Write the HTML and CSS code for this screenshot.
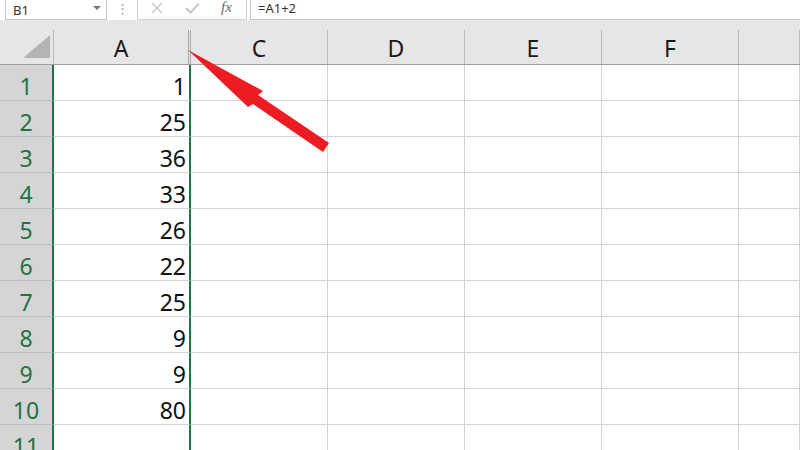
FILE: index.html
```html
<!DOCTYPE html>
<html lang="en">
<head>
    <meta charset="UTF-8">
    <title>Sheet1</title>
    <link rel="stylesheet" href="styles.css">
</head>
<body>
    <div class="sheet">
        <div class="toolbar">
            <div class="namebox"><span>B1</span><span class="caret"></span></div>
            <div class="dots">&#8942;</div>
            <div class="fnbox">
                <svg class="icon" width="12" height="12" viewBox="0 0 12 12"><path d="M1 1 L11 11 M11 1 L1 11" stroke="#c8c8c8" stroke-width="1.4" fill="none"/></svg>
                <svg class="icon" width="15" height="12" viewBox="0 0 15 12"><path d="M1 6 L5.5 10.5 L14 1.5" stroke="#c8c8c8" stroke-width="2" fill="none"/></svg>
                <span class="fx">fx</span>
            </div>
            <div class="formula">=A1+2</div>
        </div>
        <div class="band"></div>

        <div class="hrow">
            <div class="corner">
                <svg width="53" height="34" viewBox="0 0 53 34"><polygon points="23,28 50,28 50,5" fill="#b4b4b4"/></svg>
            </div>
            <div class="hcell a">A</div>
            <div class="hcell">C</div>
            <div class="hcell">D</div>
            <div class="hcell">E</div>
            <div class="hcell">F</div>
            <div class="hcell"></div>
        </div>

        <div class="row"><div class="rh">1</div><div class="cell a">1</div><div class="cell"></div><div class="cell"></div><div class="cell"></div><div class="cell"></div><div class="cell"></div></div>
        <div class="row"><div class="rh">2</div><div class="cell a">25</div><div class="cell"></div><div class="cell"></div><div class="cell"></div><div class="cell"></div><div class="cell"></div></div>
        <div class="row"><div class="rh">3</div><div class="cell a">36</div><div class="cell"></div><div class="cell"></div><div class="cell"></div><div class="cell"></div><div class="cell"></div></div>
        <div class="row"><div class="rh">4</div><div class="cell a">33</div><div class="cell"></div><div class="cell"></div><div class="cell"></div><div class="cell"></div><div class="cell"></div></div>
        <div class="row"><div class="rh">5</div><div class="cell a">26</div><div class="cell"></div><div class="cell"></div><div class="cell"></div><div class="cell"></div><div class="cell"></div></div>
        <div class="row"><div class="rh">6</div><div class="cell a">22</div><div class="cell"></div><div class="cell"></div><div class="cell"></div><div class="cell"></div><div class="cell"></div></div>
        <div class="row"><div class="rh">7</div><div class="cell a">25</div><div class="cell"></div><div class="cell"></div><div class="cell"></div><div class="cell"></div><div class="cell"></div></div>
        <div class="row"><div class="rh">8</div><div class="cell a">9</div><div class="cell"></div><div class="cell"></div><div class="cell"></div><div class="cell"></div><div class="cell"></div></div>
        <div class="row"><div class="rh">9</div><div class="cell a">9</div><div class="cell"></div><div class="cell"></div><div class="cell"></div><div class="cell"></div><div class="cell"></div></div>
        <div class="row"><div class="rh">10</div><div class="cell a">80</div><div class="cell"></div><div class="cell"></div><div class="cell"></div><div class="cell"></div><div class="cell"></div></div>
        <div class="row"><div class="rh">11</div><div class="cell a"></div><div class="cell"></div><div class="cell"></div><div class="cell"></div><div class="cell"></div><div class="cell"></div></div>

        <!-- red arrow pointing at the hidden column B -->
        <svg class="arrow" width="800" height="450" viewBox="0 0 800 450">
            <polygon points="188,50 263,91 258,95 329,143 323,152 253,104 248,107" fill="#ed1c24"/>
        </svg>
    </div>
</body>
</html>
```

FILE: styles.css
```css
body {
    margin: 0;
    font-family: "Noto Sans", sans-serif;
    background-color: #fff;
    overflow: hidden;
}

.sheet {
    position: relative;
    width: 800px;
    height: 450px;
    overflow: hidden;
}

/* formula bar */
.toolbar {
    display: flex;
    height: 20px;
    background-color: #fff;
}

.namebox {
    margin-left: 5px;
    width: 102px;
    box-sizing: border-box;
    border: 1px solid #c6c6c6;
    border-top: none;
    display: flex;
    align-items: center;
    justify-content: space-between;
    padding: 0 5px 0 7px;
    font-size: 13px;
    color: #333;
}

.caret {
    width: 0;
    height: 0;
    border-left: 4px solid transparent;
    border-right: 4px solid transparent;
    border-top: 4px solid #777;
    margin-top: -4px;
}

.dots {
    width: 30px;
    text-align: center;
    color: #a8a8a8;
    font-size: 13px;
    line-height: 16px;
}

.fnbox {
    width: 110px;
    box-sizing: border-box;
    border: 1px solid #d0d0d0;
    border-top: none;
    display: flex;
    align-items: center;
    padding: 0 10px 0 13px;
    gap: 22px;
}

.fnbox .icon {
    flex-shrink: 0;
    margin-top: -3px;
}

.fx {
    font-family: "Liberation Serif", serif;
    font-style: italic;
    font-size: 15px;
    color: #6a6a6a;
    margin-left: -1px;
    margin-top: -4px;
}

.formula {
    flex: 1;
    margin-left: 3px;
    border-left: 1px solid #c6c6c6;
    border-bottom: 1px solid #c6c6c6;
    padding-left: 7px;
    font-size: 13px;
    color: #333;
    line-height: 17px;
}

.band {
    height: 10px;
    background-color: #e6e6e6;
}

/* grid */
.hrow,
.row {
    display: grid;
    grid-template-columns: 54px 137px 137px 137px 137px 137px 1fr;
}

.hrow {
    height: 35px;
    box-sizing: border-box;
    background-color: #e6e6e6;
    border-bottom: 1px solid #9e9e9e;
}

.corner {
    border-right: 1px solid #bcbcbc;
}

.corner svg {
    display: block;
}

.hcell {
    border-right: 1px solid #bcbcbc;
    display: flex;
    align-items: center;
    justify-content: center;
    font-size: 23px;
    color: #1a1a1a;
    padding-top: 1px;
}

.hcell.a {
    border-right: 3px double #a8a8a8;
}

.row {
    height: 36px;
}

.rh,
.cell {
    box-sizing: border-box;
    display: flex;
    align-items: flex-end;
    font-size: 23px;
    line-height: 22px;
    padding-bottom: 3px;
}

.rh {
    background-color: #d5d5d5;
    color: #217346;
    border-right: 2px solid #217346;
    border-bottom: 1px solid #bcbcbc;
    justify-content: center;
}

.cell {
    border-right: 1px solid #d4d4d4;
    border-bottom: 1px solid #d4d4d4;
    color: #111;
}

.cell.a {
    border-right: 2px solid #217346;
    justify-content: flex-end;
    padding-right: 3px;
}

.arrow {
    position: absolute;
    top: 0;
    left: 0;
    pointer-events: none;
}
```
